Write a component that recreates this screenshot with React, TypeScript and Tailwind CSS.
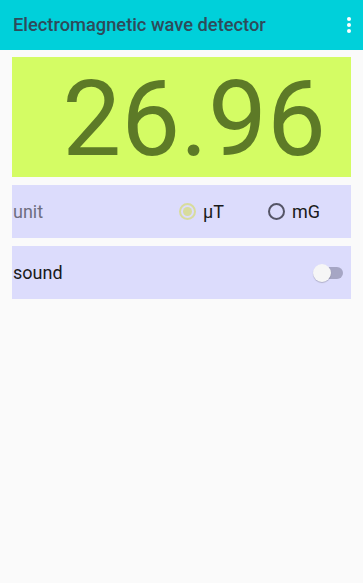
import React from 'react';

const font = { fontFamily: 'Roboto, "Liberation Sans", sans-serif' };

export default function App() {
  return (
    <div className="w-[363px] h-[583px] bg-[#fafafa] flex flex-col" style={font}>
      {/* Toolbar */}
      <div className="h-[50px] bg-[#00d0da] flex items-center justify-between pl-[13px] pr-[12px] shrink-0">
        <span className="text-[18.3px] font-medium text-[#2e4b5a]">Electromagnetic wave detector</span>
        <div className="flex flex-col gap-[2px] items-center">
          <span className="w-[4px] h-[4px] rounded-full bg-white" />
          <span className="w-[4px] h-[4px] rounded-full bg-white" />
          <span className="w-[4px] h-[4px] rounded-full bg-white" />
        </div>
      </div>

      <div className="flex flex-col px-[12px] pt-[7px]">
        {/* Reading */}
        <div className="h-[120px] bg-[#d4fc64] flex items-center justify-end pr-[25px]">
          <span className="text-[105px] leading-none text-[#5d7a27] pt-[4px]">26.96</span>
        </div>

        {/* Unit row */}
        <div className="h-[53px] mt-[8px] bg-[#dcdcfc] flex items-center pl-[1px] pr-[31px]">
          <span className="text-[18px] text-[#6e6e80] flex-1">unit</span>
          <div className="flex items-center">
            <span className="w-[17px] h-[17px] rounded-full border-2 border-[#d8dc9c] flex items-center justify-center mr-[7px]">
              <span className="w-[9px] h-[9px] rounded-full bg-[#d8dc9c]" />
            </span>
            <span className="text-[18px] text-[#1a1a1a]">μT</span>
          </div>
          <div className="flex items-center ml-[44px]">
            <span className="w-[17px] h-[17px] rounded-full border-2 border-[#555566] mr-[7px]" />
            <span className="text-[18px] text-[#1a1a1a]">mG</span>
          </div>
        </div>

        {/* Sound row */}
        <div className="h-[53px] mt-[8px] bg-[#dcdcfc] flex items-center pl-[1px] pr-[8px]">
          <span className="text-[18px] text-[#1a1a1a] flex-1">sound</span>
          <div className="relative w-[30px] h-[18px] flex items-center">
            <span className="absolute left-[4px] right-0 h-[12px] rounded-full bg-[#a6a6c4]" />
            <span className="absolute left-0 w-[18px] h-[18px] rounded-full bg-[#f6f6f6] shadow-[0_1px_1px_rgba(0,0,0,0.2)]" />
          </div>
        </div>
      </div>
    </div>
  );
}
